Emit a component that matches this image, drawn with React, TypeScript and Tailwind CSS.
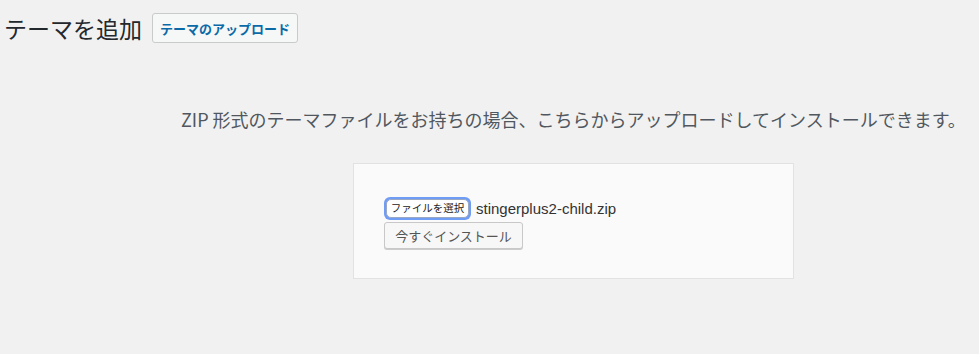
export default function App() {
  const jp = "font-['Noto_Sans_CJK_JP','Noto_Sans',sans-serif]";
  return (
    <div className={`min-h-[354px] w-full bg-[#f1f1f1] ${jp}`}>
      {/* header */}
      <div className="flex items-center pl-[4px] pt-[13px]">
        <h1 className="text-[23px] leading-[30px] font-normal text-[#23282d]">テーマを追加</h1>
        <button className="ml-[10px] h-[30px] px-[7px] rounded-[3px] border border-[#c9cacc] bg-[#f6f7f7] text-[13px] font-bold text-[#0a6aa8] leading-none">
          テーマのアップロード
        </button>
      </div>

      {/* help text */}
      <p className="mt-[63px] pl-[181px] text-[18px] leading-[26px] text-[#50575e]">
        ZIP 形式のテーマファイルをお持ちの場合、こちらからアップロードしてインストールできます。
      </p>

      {/* upload form */}
      <div className="ml-[353px] mt-[31px] w-[441px] h-[116px] border border-[#e2e2e2] bg-[#fafafa] pl-[30px] pt-[33px]">
        <div className="flex items-center">
          <span className="flex items-center justify-center h-[23px] w-[87px] rounded-[6px] bg-[#6f9cf4] p-[2px]">
            <span className="flex items-center justify-center h-full w-full rounded-[5px] bg-white border border-[#9aa8c4] text-[10.5px] text-[#222] leading-none">
              ファイルを選択
            </span>
          </span>
          <span className="ml-[5px] text-[15px] text-[#333] font-['Liberation_Sans',sans-serif] leading-none">
            stingerplus2-child.zip
          </span>
        </div>
        <button className="mt-[2px] h-[27px] w-[139px] rounded-[3px] border border-[#c8c8c8] bg-[#f7f7f7] shadow-[0_1px_0_#cccccc] text-[13px] text-[#555] leading-none">
          今すぐインストール
        </button>
      </div>
    </div>
  );
}
